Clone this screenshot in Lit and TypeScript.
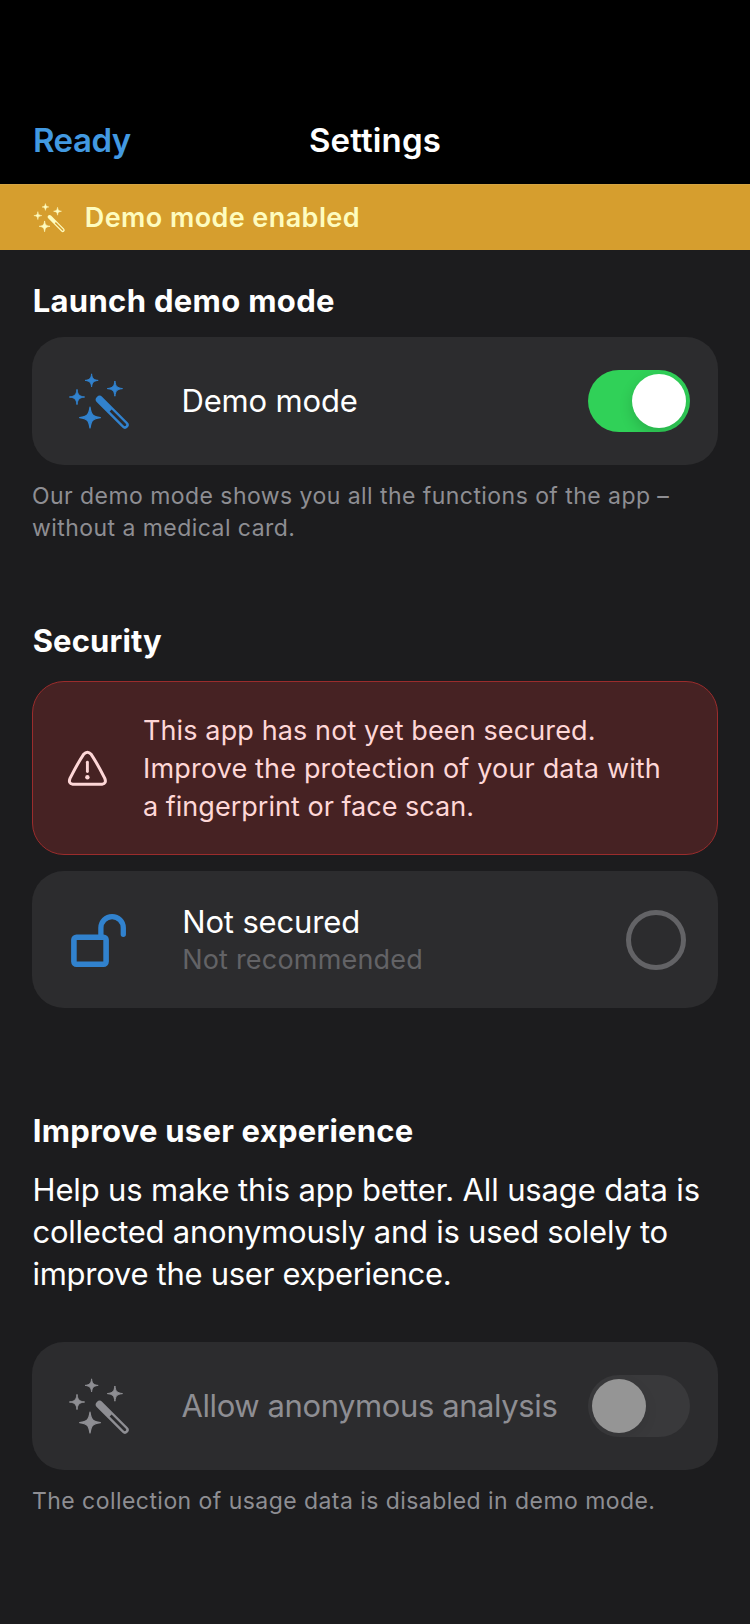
import { LitElement, html, svg, css } from "lit";
import { customElement, property } from "lit/decorators.js";
import { classMap } from "lit/directives/class-map.js";

const star = (x: number, y: number, r: number) => svg`
  <path transform="translate(${x} ${y}) scale(${r})"
    d="M0-.94C.1-.25.25-.1.94 0C.25.1.1.25 0 .94C-.1.25-.25.1-.94 0C-.25-.1-.1-.25 0-.94Z"
    fill="currentColor" stroke="currentColor" stroke-width=".12" stroke-linejoin="round" />`;

const wand = html`
  <svg class="icon" viewBox="0 0 80 72">
    ${star(31.6, 15.4, 7)} ${star(54.9, 23.6, 8.1)} ${star(17, 32, 8.1)} ${star(30, 52.6, 11)}
    <path transform="translate(39.6 34.6) rotate(45)" fill="currentColor" fill-rule="evenodd"
      d="M0-3.8H35.8A3.8 3.8 0 0 1 35.8 3.8H0A3.8 3.8 0 0 1 0-3.8ZM15.5-1.5V1.3H35.6A1.4 1.4 0 0 0 35.6-1.5Z" />
  </svg>`;

const lock = html`
  <svg class="icon" viewBox="0 0 80 71" fill="none" stroke="currentColor">
    <rect x="13.9" y="33.2" width="32.2" height="27" rx="2.6" stroke-width="5.6" />
    <path d="M40.9 32V23.8a11.2 11.2 0 0 1 22.4 0V30.3" stroke-width="5.3" stroke-linecap="round" />
  </svg>`;

const warning = html`
  <svg class="icon" viewBox="0 0 80 56" fill="none" stroke="currentColor" stroke-width="3" stroke-linecap="round">
    <path stroke-linejoin="round"
      d="M23.6 14.3Q27.4 10.2 31.2 14.3Q37 23 44.8 38.4Q46.8 43.5 42 44.3H12.8Q8 43.5 10 38.4Q17.8 23 23.6 14.3Z" />
    <path d="M27.4 22.2V31.6" stroke-width="2.9" />
    <circle cx="27.4" cy="37.3" r="2.2" fill="currentColor" stroke="none" />
  </svg>`;

@customElement("toggle-switch")
export class ToggleSwitch extends LitElement {
  @property({ type: Boolean }) on = false;
  static styles = css`
    :host { display: block; flex: none; }
    .track { display: flex; box-sizing: border-box; width: 102px; height: 62px; padding: 4px; border-radius: 31px; background: #39393b; overflow: hidden; }
    .knob { width: 54px; height: 54px; border-radius: 50%; background: #959595; box-shadow: 0 5px 14px rgba(0, 0, 0, 0.08); }
    .on { justify-content: flex-end; background: #30d158; }
    .on .knob { background: #fff; box-shadow: 0 5px 14px rgba(0, 0, 0, 0.16); }
  `;
  render() {
    return html`<div class=${classMap({ track: true, on: this.on })}><div class="knob"></div></div>`;
  }
}

@customElement("app-root")
export class AppRoot extends LitElement {
  static styles = css`
    :host { display: block; min-height: 1624px; background: #1c1c1e; color: #fff; font-family: Inter, "Liberation Sans", sans-serif; }
    span { display: block; white-space: nowrap; }
    svg { display: block; flex: none; }
    header { display: grid; grid-template-columns: 1fr auto 1fr; box-sizing: border-box; height: 184px; padding: 119.5px 32px 0; background: #000; font-size: 33px; font-weight: 600; line-height: 40px; }
    .ready { padding-left: 1px; color: #4299e1; letter-spacing: -0.5px; }
    .title { letter-spacing: 0.15px; }
    .banner { display: flex; align-items: center; box-sizing: border-box; height: 66px; padding-left: 29.3px; background: #d69e2e; border-top: 1px solid #d5a544; color: #fefcbf; font-size: 27px; font-weight: 600; letter-spacing: 0.42px; }
    .banner .icon { width: 41.6px; height: 37.4px; margin-right: 13.9px; }
    main { padding: 33px 32px 0; }
    h2 { margin: 0; padding-left: 0.7px; font-size: 31px; line-height: 36px; font-weight: 700; white-space: nowrap; }
    .h-demo { letter-spacing: 0.32px; margin-bottom: 18px; }
    .h-sec { letter-spacing: 0.12px; margin: 79px 0 22px; }
    .h-ux { letter-spacing: 0.24px; margin: 105px 0 20px; }
    .card { display: flex; align-items: center; box-sizing: border-box; height: 128px; padding: 0 28px; border-radius: 32px; background: #2c2c2e; font-size: 31px; line-height: 38px; }
    .card .icon { width: 80px; color: #3182ce; }
    .label { flex: 1; margin-left: 41.5px; }
    .disabled, .card.disabled .icon { color: #8e8e93; }
    .caption { margin: 15px 0 0; font-size: 23px; line-height: 32px; letter-spacing: 0.445px; color: #8e8e93; }
    .card.alert { height: 174px; margin-bottom: 16px; padding: 0 27px; border: 1px solid #9b2c2c; background: #462223; color: #fed7d7; font-size: 27px; }
    .alert .label { margin-left: 3px; padding-top: 2px; }
    .card.alert .icon { color: #fed7d7; }
    .card.tall { height: 137px; padding-right: 32px; }
    .tall .label { margin-left: 42.2px; padding-top: 1px; }
    .sub { font-size: 27px; line-height: 37px; color: #636366; letter-spacing: 0.2px; }
    .radio { box-sizing: border-box; width: 60px; height: 60px; margin-top: 1px; border: 5px solid #636366; border-radius: 50%; }
    .para { margin: 0 0 47px; padding-left: 0.5px; font-size: 31px; line-height: 42px; }
    .t1 { letter-spacing: -0.18px; }
    .t2 { letter-spacing: 0.115px; }
    .t3 { letter-spacing: 0.165px; }
    .t4 { letter-spacing: 0.02px; }
    .t5 { letter-spacing: -0.15px; }
    .t6 { letter-spacing: -0.14px; }
    .t7 { letter-spacing: -0.24px; }
    .t8 { letter-spacing: -0.285px; }
    .t9 { letter-spacing: -0.41px; }
  `;

  render() {
    return html`
      <header><span class="ready">Ready</span><span class="title">Settings</span></header>
      <div class="banner">${wand}<span>Demo mode enabled</span></div>
      <main>
        <h2 class="h-demo">Launch demo mode</h2>
        <div class="card">${wand}<span class="label t1">Demo mode</span><toggle-switch on></toggle-switch></div>
        <p class="caption">
          <span>Our demo mode shows you all the functions of the app –</span>
          <span>without a medical card.</span>
        </p>
        <h2 class="h-sec">Security</h2>
        <div class="card alert">
          ${warning}
          <div class="label">
            <span class="t2">This app has not yet been secured.</span>
            <span class="t3">Improve the protection of your data with</span>
            <span class="t4">a fingerprint or face scan.</span>
          </div>
        </div>
        <div class="card tall">
          ${lock}
          <div class="label"><span class="t5">Not secured</span><span class="sub">Not recommended</span></div>
          <div class="radio"></div>
        </div>
        <h2 class="h-ux">Improve user experience</h2>
        <p class="para">
          <span class="t6">Help us make this app better. All usage data is</span>
          <span class="t7">collected anonymously and is used solely to</span>
          <span class="t8">improve the user experience.</span>
        </p>
        <div class="card disabled">${wand}<span class="label t9">Allow anonymous analysis</span><toggle-switch></toggle-switch></div>
        <p class="caption"><span>The collection of usage data is disabled in demo mode.</span></p>
      </main>
    `;
  }
}
